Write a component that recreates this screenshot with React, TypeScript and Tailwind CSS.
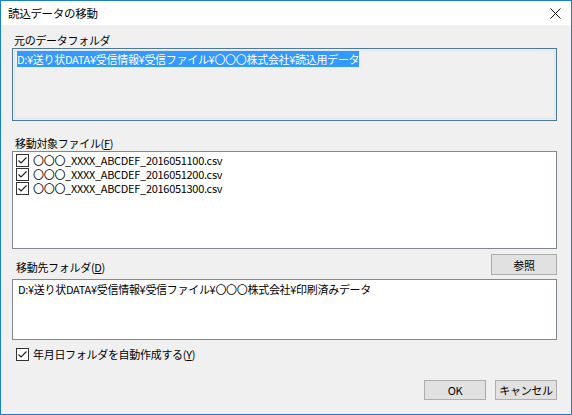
import React from "react";

const font = { fontFamily: '"Noto Sans CJK JP", "Noto Sans", sans-serif' };

function Check() {
  return (
    <svg width="13" height="13" viewBox="0 0 13 13" className="shrink-0">
      <rect x="0.5" y="0.5" width="12" height="12" fill="#fff" stroke="#333" />
      <path d="M2.5 6.5 L5 9 L10.5 3.5" fill="none" stroke="#222" strokeWidth="1.2" />
    </svg>
  );
}

const files = [
  "〇〇〇_XXXX_ABCDEF_2016051100.csv",
  "〇〇〇_XXXX_ABCDEF_2016051200.csv",
  "〇〇〇_XXXX_ABCDEF_2016051300.csv",
];

export default function App() {
  return (
    <div
      className="w-[572px] h-[415px] border border-[#1a7fd4] bg-[#f0f0f0] flex flex-col text-[11px] tracking-[-0.3px] text-black leading-[16px] overflow-hidden"
      style={font}
    >
      <div className="h-[24px] bg-white flex items-center justify-between pl-[7px] pr-[10px] shrink-0 text-[11.5px]">
        <span>読込データの移動</span>
        <svg width="11" height="11" viewBox="0 0 11 11">
          <path d="M0.5 0.5 L10.5 10.5 M10.5 0.5 L0.5 10.5" stroke="#111" strokeWidth="1" />
        </svg>
      </div>
      <div className="flex flex-col pl-[11px] pr-[14px]">
        <div className="mt-[7px] pl-[2px] h-[16px]">元のデータフォルダ</div>
        <div className="h-[73px] border border-[#4f7896] bg-[#f0f0f0] p-[1px]">
          <div className="h-full border border-[#dbe6f1] pl-[2px]">
            <span className="bg-[#3399ff] text-white">D:¥送り状DATA¥受信情報¥受信ファイル¥〇〇〇株式会社¥読込用データ</span>
          </div>
        </div>
        <div className="mt-[14px] pl-[3px] h-[16px]">移動対象ファイル(<span className="underline">F</span>)</div>
        <div className="h-[98px] border border-[#828790] bg-white pl-[3px] pt-[1px] flex flex-col">
          {files.map((f) => (
            <div key={f} className="flex items-center h-[14px] gap-[4px]">
              <Check />
              <span className="leading-[14px]">{f}</span>
            </div>
          ))}
        </div>
        <div className="mt-[5px] flex items-end justify-between h-[21px]">
          <div className="pl-[4px] leading-[16px]">移動先フォルダ(<span className="underline">D</span>)</div>
          <button className="w-[66px] h-[21px] bg-[#e1e1e1] border border-[#adadad] flex items-center justify-center">
            参照
          </button>
        </div>
        <div className="mt-[4px] h-[61px] border border-[#828790] bg-white pl-[5px] pt-[1px]">
          D:¥送り状DATA¥受信情報¥受信ファイル¥〇〇〇株式会社¥印刷済みデータ
        </div>
        <div className="mt-[6px] pl-[4px] flex items-center gap-[4px] h-[16px]">
          <Check />
          <span>年月日フォルダを自動作成する(<span className="underline">Y</span>)</span>
        </div>
        <div className="mt-[18px] flex justify-end gap-[9px]">
          <button className="w-[62px] h-[20px] bg-[#e1e1e1] border border-[#adadad] flex items-center justify-center">OK</button>
          <button className="w-[62px] h-[20px] bg-[#e1e1e1] border border-[#adadad] flex items-center justify-center">キャンセル</button>
        </div>
      </div>
    </div>
  );
}
